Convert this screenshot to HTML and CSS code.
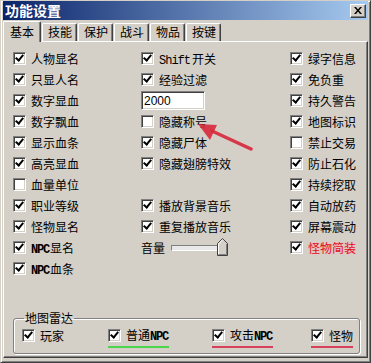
FILE: index.html
```html
<!DOCTYPE html>
<html lang="zh-CN">
<head>
    <meta charset="UTF-8">
    <title>功能设置</title>
    <link rel="stylesheet" href="styles.css">
</head>
<body>
<div class="window">
    <div class="titlebar">
        <span class="title">功能设置</span>
        <span class="close">
            <svg width="8" height="7" viewBox="0 0 8 7"><path d="M0 0h2l2 2.5L6 0h2L5 3.5 8 7H6L4 4.5 2 7H0l3-3.5z" fill="#000"/></svg>
        </span>
    </div>

    <div class="tabs">
        <span class="tab active">基本</span>
        <span class="tab">技能</span>
        <span class="tab">保护</span>
        <span class="tab">战斗</span>
        <span class="tab">物品</span>
        <span class="tab">按键</span>
    </div>

    <div class="panel">
        <div class="columns">
            <div class="col col-1">
                <label class="row"><span class="cb on"></span><span>人物显名</span></label>
                <label class="row"><span class="cb on"></span><span>只显人名</span></label>
                <label class="row"><span class="cb on"></span><span>数字显血</span></label>
                <label class="row"><span class="cb on"></span><span>数字飘血</span></label>
                <label class="row"><span class="cb on"></span><span>显示血条</span></label>
                <label class="row"><span class="cb on"></span><span>高亮显血</span></label>
                <label class="row"><span class="cb"></span><span>血量单位</span></label>
                <label class="row"><span class="cb on"></span><span>职业等级</span></label>
                <label class="row"><span class="cb on"></span><span>怪物显名</span></label>
                <label class="row"><span class="cb on"></span><span><span class="npc">NPC</span>显名</span></label>
                <label class="row"><span class="cb on"></span><span><span class="npc">NPC</span>血条</span></label>
            </div>
            <div class="col col-2">
                <label class="row"><span class="cb on"></span><span><span class="en">Shift</span>开关</span></label>
                <label class="row"><span class="cb on"></span><span>经验过滤</span></label>
                <div class="row"><input class="field" type="text" value="2000"></div>
                <label class="row"><span class="cb"></span><span>隐藏称号</span></label>
                <label class="row"><span class="cb on"></span><span>隐藏尸体</span></label>
                <label class="row"><span class="cb on"></span><span>隐藏翅膀特效</span></label>
                <div class="row"></div>
                <label class="row"><span class="cb on"></span><span>播放背景音乐</span></label>
                <label class="row"><span class="cb on"></span><span>重复播放音乐</span></label>
                <div class="row volume">
                    <span>音量</span>
                    <span class="track"></span>
                    <svg class="thumb" width="11" height="18" viewBox="0 0 11 18">
                        <path d="M0.5 17.5V5.5L5.5 0.5L10.5 5.5V17.5Z" fill="#d4d0c8" stroke="#404040"/>
                        <path d="M1.5 16.5V6L5.5 1.8" fill="none" stroke="#fff"/>
                        <path d="M1.5 16.5H9.5V6" fill="none" stroke="#808080"/>
                    </svg>
                </div>
            </div>
            <div class="col col-3">
                <label class="row"><span class="cb on"></span><span>绿字信息</span></label>
                <label class="row"><span class="cb on"></span><span>免负重</span></label>
                <label class="row"><span class="cb on"></span><span>持久警告</span></label>
                <label class="row"><span class="cb on"></span><span>地图标识</span></label>
                <label class="row"><span class="cb"></span><span>禁止交易</span></label>
                <label class="row"><span class="cb on"></span><span>防止石化</span></label>
                <label class="row"><span class="cb on"></span><span>持续挖取</span></label>
                <label class="row"><span class="cb on"></span><span>自动放药</span></label>
                <label class="row"><span class="cb on"></span><span>屏幕震动</span></label>
                <label class="row"><span class="cb on"></span><span class="warn">怪物简装</span></label>
            </div>
        </div>

        <fieldset class="radar">
            <legend>地图雷达</legend>
            <div class="radar-items">
                <label class="item"><span class="cb on"></span><span>玩家</span></label>
                <label class="item"><span class="mark green"><span class="cb on"></span><span>普通<span class="npc">NPC</span></span></span></label>
                <label class="item"><span class="mark red"><span class="cb on"></span><span>攻击<span class="npc">NPC</span></span></span></label>
                <label class="item"><span class="mark red"><span class="cb on"></span><span>怪物</span></span></label>
            </div>
        </fieldset>
    </div>

    <!-- red pointer drawn over the dialog -->
    <svg class="arrow" width="371" height="363" viewBox="0 0 371 363">
        <line x1="250" y1="148" x2="211" y2="130" stroke="#d8283c" stroke-width="3.5" stroke-linecap="round" opacity="0.9"/>
        <path d="M197 123L216 124L209 139Z" fill="#d8283c" opacity="0.9"/>
    </svg>
</div>
</body>
</html>
```

FILE: styles.css
```css
body {
    margin: 0;
    padding: 0;
    background-color: #d4d0c8;
    font-family: "Noto Sans CJK SC", "DejaVu Sans", sans-serif;
    font-size: 12px;
    color: #000;
}

.window {
    position: relative;
    width: 371px;
    height: 363px;
    box-sizing: border-box;
    background-color: #d4d0c8;
    border: 1px solid #d4d0c8;
    border-right-color: #404040;
    border-bottom-color: #404040;
    box-shadow: inset 1px 1px #fff, inset -1px -1px #808080;
    padding: 0 2px 2px 2px;
}

.titlebar {
    display: flex;
    align-items: center;
    justify-content: space-between;
    height: 19px;
    padding: 0 2px 0 2px;
    background: linear-gradient(to right, #0a246a, #a6caf0);
}

.title {
    color: #fff;
    font-weight: bold;
    font-size: 14px;
    line-height: 19px;
}

.close {
    display: flex;
    align-items: center;
    justify-content: center;
    width: 16px;
    height: 14px;
    box-sizing: border-box;
    background-color: #d4d0c8;
    border: 1px solid #fff;
    border-right-color: #404040;
    border-bottom-color: #404040;
    box-shadow: inset -1px -1px #808080;
}

.tabs {
    display: flex;
    align-items: flex-end;
    height: 21px;
}

.tab {
    height: 17px;
    line-height: 16px;
    padding: 0 4px 0 5px;
    margin-right: 1px;
    border: 1px solid #fff;
    border-bottom: none;
    border-right-color: #404040;
    border-radius: 2px 2px 0 0;
    box-shadow: inset -1px 0 #808080;
}

.tab.active {
    position: relative;
    height: 20px;
    line-height: 19px;
    margin-bottom: -1px;
    padding: 0 6px;
    background-color: #d4d0c8;
    z-index: 1;
}

.panel {
    height: 317px;
    box-sizing: border-box;
    border: 1px solid #fff;
    border-right-color: #404040;
    border-bottom-color: #404040;
    box-shadow: inset -1px -1px #808080;
    padding-top: 6px;
}

.columns {
    display: grid;
    grid-template-columns: 128px 149px 1fr;
    padding-left: 9px;
}

.col {
    display: flex;
    flex-direction: column;
}

.row {
    display: flex;
    align-items: center;
    gap: 5px;
    height: 21px;
    white-space: nowrap;
}

.cb {
    position: relative;
    flex: none;
    width: 13px;
    height: 13px;
    box-sizing: border-box;
    background-color: #fff;
    border: 1px solid #808080;
    border-right-color: #fff;
    border-bottom-color: #fff;
    box-shadow: inset 1px 1px #404040, inset -1px -1px #d4d0c8;
}

.cb.on::after {
    content: "";
    position: absolute;
    left: 3px;
    top: 0;
    width: 3px;
    height: 6px;
    border-right: 2px solid #000;
    border-bottom: 2px solid #000;
    transform: rotate(40deg);
}

.en {
    font-family: "Liberation Mono", "DejaVu Sans Mono", monospace;
    font-size: 12px;
    letter-spacing: -1px;
    margin-right: 2px;
}

.npc {
    font-family: "Liberation Mono", "DejaVu Sans Mono", monospace;
    font-size: 12px;
    font-weight: bold;
    letter-spacing: -1.2px;
    margin-right: 1px;
}

.warn {
    color: #e0101c;
    text-shadow: 0 0 2px #ffb0b8;
}

.field {
    width: 64px;
    height: 19px;
    box-sizing: border-box;
    margin: 0;
    padding: 0 2px;
    font-family: "Liberation Sans", Arial, sans-serif;
    font-size: 12px;
    background-color: #fff;
    border: 1px solid #808080;
    border-right-color: #fff;
    border-bottom-color: #fff;
    box-shadow: inset 1px 1px #404040, inset -1px -1px #d4d0c8;
    outline: none;
}

.volume {
    gap: 0;
}

.track {
    width: 48px;
    height: 4px;
    margin-left: 6px;
    border: 1px solid #808080;
    border-right-color: #fff;
    border-bottom-color: #fff;
    background-color: #e8e8e8;
}

.thumb {
    margin-left: -4px;
    margin-top: -2px;
}

.radar {
    margin: 32px 7px 0 9px;
    padding: 0 0 9px 8px;
    height: 43px;
    box-sizing: border-box;
    border: 1px solid #808080;
    border-radius: 3px;
    box-shadow: 1px 1px #fff, inset 1px 1px #fff;
}

.radar legend {
    padding: 0 1px;
    margin-left: 2px;
    line-height: 14px;
}

.radar-items {
    display: grid;
    grid-template-columns: 86px 104px 99px 1fr;
    align-items: center;
    height: 20px;
}

.item {
    display: flex;
    align-items: center;
    gap: 5px;
    white-space: nowrap;
}

.mark {
    display: flex;
    align-items: center;
    gap: 5px;
    padding-bottom: 2px;
    margin-bottom: -4px;
    border-bottom: 2px solid;
}

.mark.green {
    border-bottom-color: #4cd44c;
}

.mark.red {
    border-bottom-color: #d8405a;
}

.arrow {
    position: absolute;
    left: 0;
    top: 0;
    pointer-events: none;
}
```
